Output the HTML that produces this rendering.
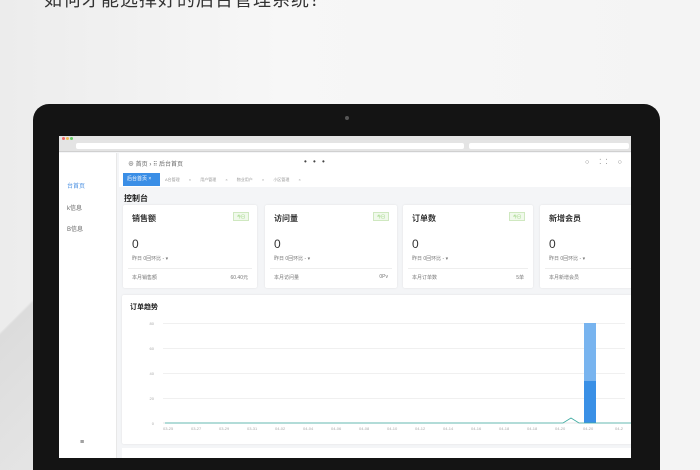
<!DOCTYPE html>
<html style="overflow:hidden;height:470px"><head><meta charset="utf-8"><style>
*{margin:0;padding:0;box-sizing:border-box}
body{width:700px;height:470px;overflow:hidden;position:relative;background:linear-gradient(90deg,#ececec,#f7f7f7 40%,#f4f4f4);font-family:"Liberation Sans","Noto Sans CJK SC",sans-serif;color:#333}
.a{position:absolute;white-space:nowrap}
.t{font-size:6px;color:#666}
.card{position:absolute;background:#fff;border-radius:2px;box-shadow:0 0 2px rgba(0,0,0,.08)}
.card .h{position:absolute;left:9px;top:8px;font-size:8px;font-weight:bold;color:#333}
.card .g{position:absolute;right:8px;top:7px;width:16px;height:9px;border:1px solid #cfe8c0;background:#f0f9eb;font-size:4px;color:#8c6;text-align:center;line-height:7px}
.card .n{position:absolute;left:9px;top:32px;font-size:12px;color:#333}
.card .s{position:absolute;left:9px;top:50px;font-size:5px;color:#777}
.card .l{position:absolute;left:5px;right:5px;top:63px;border-top:1px solid #eee}
.card .f{position:absolute;left:9px;top:69px;font-size:5px;color:#777}
.card .r{position:absolute;right:9px;top:69px;font-size:5px;color:#777}
.yl{position:absolute;font-size:4px;color:#aaa;width:10px;text-align:right}
.gl{position:absolute;right:6px;border-top:1px solid #f0f0f0}
</style></head><body>
<div class="a" style="left:44px;top:-14px;font-size:18px;color:#333;letter-spacing:1px">如何才能选择好的后台管理系统？</div>
<div class="a" style="left:0;top:200px;width:60px;height:270px;background:linear-gradient(135deg,transparent 40%,#dcdcdc 41%,#e6e6e6)"></div>
<div class="a" style="left:33px;top:104px;width:627px;height:366px;background:#141414;border-radius:16px 16px 0 0"></div>
<div class="a" style="left:345px;top:116px;width:4px;height:4px;border-radius:50%;background:#555"></div>
<div class="a" style="left:59px;top:136px;width:572px;height:322px;background:#f4f5f7;overflow:hidden">
 <div class="a" style="left:0;top:0;width:572px;height:16px;background:#e4e4e4;border-bottom:1px solid #d0d0d0"></div>
 <div class="a" style="left:3px;top:1px;width:3px;height:3px;border-radius:50%;background:#e66"></div>
 <div class="a" style="left:7px;top:1px;width:3px;height:3px;border-radius:50%;background:#eb5"></div>
 <div class="a" style="left:11px;top:1px;width:3px;height:3px;border-radius:50%;background:#6c6"></div>
 <div class="a" style="left:17px;top:7px;width:388px;height:6px;background:#fff;border-radius:2px"></div>
 <div class="a" style="left:410px;top:7px;width:160px;height:6px;background:#fff;border-radius:2px"></div>
 <div class="a" style="left:0;top:17px;width:58px;height:305px;background:#fff;border-right:1px solid #e8e8e8"></div>
 <div class="a t" style="left:8px;top:45px;color:#4a90e2">台首页</div>
 <div class="a t" style="left:8px;top:67px">k信息</div>
 <div class="a t" style="left:8px;top:88px">B信息</div>
 <div class="a" style="left:21px;top:303px;font-size:7px;color:#444">≡</div>
 <div class="a" style="left:60px;top:17px;width:512px;height:20px;background:#fff"></div>
 <div class="a t" style="left:69px;top:23px">⊕ 首页 › ⠿ 后台首页</div>
 <div class="a" style="left:245px;top:21px;font-size:8px;color:#444;letter-spacing:2px">• • •</div>
 <div class="a" style="left:526px;top:22px;font-size:7px;color:#777;letter-spacing:4px">○ ⁚⁚ ○</div>
 <div class="a" style="left:60px;top:37px;width:512px;height:14px;background:#fff"></div>
 <div class="a" style="left:64px;top:37px;width:37px;height:13px;background:#3a8ee6;color:#fff;font-size:5px;line-height:13px;padding-left:4px">后台首页 ×</div>
 <div class="a" style="left:106px;top:41px;font-size:4px;color:#999;word-spacing:8px">A台管理 × 用户管理 × 物业用户 × 小区管理 ×</div>
 <div class="a" style="left:65px;top:57px;font-size:8px;font-weight:bold;color:#222">控制台</div>
 <div class="card" style="left:64px;top:69px;width:134px;height:83px"><div class="h">销售额</div><div class="g">今日</div><div class="n">0</div><div class="s">昨日 0回环比 - ▾</div><div class="l"></div><div class="f">本月销售额</div><div class="r">60.40元</div></div>
 <div class="card" style="left:206px;top:69px;width:132px;height:83px"><div class="h">访问量</div><div class="g">今日</div><div class="n">0</div><div class="s">昨日 0回环比 - ▾</div><div class="l"></div><div class="f">本月访问量</div><div class="r">0Pv</div></div>
 <div class="card" style="left:344px;top:69px;width:130px;height:83px"><div class="h">订单数</div><div class="g">今日</div><div class="n">0</div><div class="s">昨日 0回环比 - ▾</div><div class="l"></div><div class="f">本月订单数</div><div class="r">5单</div></div>
 <div class="card" style="left:481px;top:69px;width:100px;height:83px"><div class="h">新增会员</div><div class="n">0</div><div class="s">昨日 0回环比 - ▾</div><div class="l"></div><div class="f">本月新增会员</div></div>
 <div class="card" style="left:63px;top:159px;width:510px;height:149px">
  <div class="a" style="left:8px;top:7px;font-size:7px;font-weight:bold;color:#222">订单趋势</div>
 </div>
 <div class="a" style="left:63px;top:312px;width:510px;height:10px;background:#fff"></div>
 <div class="yl" style="left:85px;top:185px">80</div><div class="gl" style="left:104px;top:187px"></div>
 <div class="yl" style="left:85px;top:210px">60</div><div class="gl" style="left:104px;top:212px"></div>
 <div class="yl" style="left:85px;top:235px">40</div><div class="gl" style="left:104px;top:237px"></div>
 <div class="yl" style="left:85px;top:260px">20</div><div class="gl" style="left:104px;top:262px"></div>
 <div class="yl" style="left:85px;top:285px">0</div>
 <svg class="a" style="left:104px;top:180px" width="468" height="120">
  <line x1="0" y1="107" x2="468" y2="107" stroke="#ccc" stroke-width=".6"/>
  <rect x="421" y="7" width="12" height="58" fill="#78b4ef"/>
  <rect x="421" y="65" width="12" height="42" fill="#3a90e6"/>
  <polyline points="2,107 400,107 408,102 416,107 468,107" fill="none" stroke="#3aa99f" stroke-width=".8"/>
  <g font-size="4" fill="#aaa" font-family="Liberation Sans">
  <text x="0" y="114">03-25</text><text x="28" y="114">03-27</text><text x="56" y="114">03-29</text><text x="84" y="114">03-31</text><text x="112" y="114">04-02</text><text x="140" y="114">04-04</text><text x="168" y="114">04-06</text><text x="196" y="114">04-08</text><text x="224" y="114">04-10</text><text x="252" y="114">04-12</text><text x="280" y="114">04-14</text><text x="308" y="114">04-16</text><text x="336" y="114">04-18</text><text x="364" y="114" >04-18</text><text x="392" y="114">04-20</text><text x="420" y="114">04-20</text><text x="452" y="114">04-2</text>
  </g>
 </svg>
</div>
</body></html>
